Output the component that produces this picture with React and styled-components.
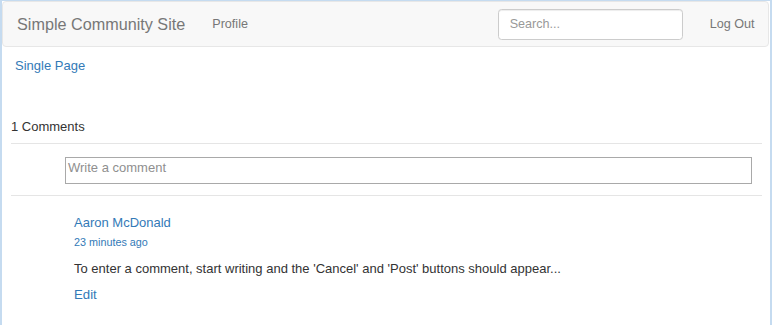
import React from 'react'
import styled, { createGlobalStyle } from 'styled-components'

const GlobalStyle = createGlobalStyle`
  html, body {
    margin: 0;
    padding: 0;
    background: #fff;
  }
  body {
    font-family: "Liberation Sans", Arial, Helvetica, sans-serif;
    font-size: 13px;
    line-height: 18px;
    color: #333;
  }
  * { box-sizing: border-box; }
`

function App() {
    return (
        <Frame>
            <GlobalStyle />
            <Navbar>
                <Brand href="#">Simple Community Site</Brand>
                <NavLink href="#">Profile</NavLink>
                <Spacer />
                <Search placeholder="Search..." />
                <NavLink href="#">Log Out</NavLink>
            </Navbar>
            <Page>
                <Crumb href="#">Single Page</Crumb>
                <Comments>
                    <Count>1 Comments</Count>
                    <Rule $gap={7} />
                    <Composer>
                        <CommentInput rows={1} placeholder="Write a comment" />
                    </Composer>
                    <Rule $gap={0} />
                    <Comment>
                        <Author href="#">Aaron McDonald</Author>
                        <Time>23 minutes ago</Time>
                        <Body>To enter a comment, start writing and the 'Cancel' and 'Post' buttons should appear...</Body>
                        <Edit href="#">Edit</Edit>
                    </Comment>
                </Comments>
            </Page>
        </Frame>
    )
}

export default App

const Frame = styled.div`
    height: 325px;
    border-top: 1px solid #c5dbf0;
    border-left: 2px solid #c5dbf0;
    border-right: 2px solid #c5dbf0;
    overflow: hidden;
`
const Navbar = styled.nav`
    display: flex;
    align-items: center;
    height: 46px;
    margin-right: 1px;
    background: #f8f8f8;
    border: 1px solid #e7e7e7;
    border-radius: 4px;
`
const Brand = styled.a`
    padding: 0 13.5px 0 14px;
    font-size: 16.2px;
    line-height: 20px;
    color: #777;
    text-decoration: none;
`
const NavLink = styled.a`
    padding: 0 13.5px;
    font-size: 12.6px;
    color: #777;
    text-decoration: none;
`
const Spacer = styled.div`
    flex: 1;
`
const Search = styled.input`
    width: 185px;
    height: 31px;
    margin-right: 13.5px;
    padding: 0 11px;
    font-family: inherit;
    font-size: 12.6px;
    color: #555;
    border: 1px solid #ccc;
    border-radius: 3.6px;
    background: #fff;
    box-shadow: inset 0 1px 1px rgba(0,0,0,.075);
    &::placeholder { color: #999; }
`
const Page = styled.main`
    display: flex;
    flex-direction: column;
    align-items: flex-start;
    padding: 10px 8px 0 9px;
`
const Crumb = styled.a`
    margin-left: 4px;
    color: #337ab7;
    text-decoration: none;
`
const Comments = styled.section`
    align-self: stretch;
    margin-top: 43px;
`
const Count = styled.div`
    line-height: 18px;
`
const Rule = styled.hr`
    margin: ${p => p.$gap}px 0 0;
    border: 0;
    border-top: 1px solid #e5e5e5;
`
const Composer = styled.div`
    padding: 13px 10px 11px 54px;
`
const CommentInput = styled.textarea`
    display: block;
    width: 100%;
    height: 27px;
    padding: 2px 2px 0;
    resize: none;
    overflow: hidden;
    font-family: inherit;
    font-size: 13px;
    line-height: 16px;
    border: 1px solid #a9a9a9;
    border-radius: 0;
    &::placeholder { color: #8f8f8f; }
`
const Comment = styled.article`
    display: flex;
    flex-direction: column;
    align-items: flex-start;
    padding: 18px 0 0 63px;
`
const Author = styled.a`
    color: #337ab7;
    text-decoration: none;
`
const Time = styled.div`
    margin-top: 2px;
    font-size: 10.8px;
    line-height: 16px;
    color: #337ab7;
`
const Body = styled.p`
    margin: 10px 0 0;
`
const Edit = styled.a`
    margin-top: 8px;
    font-size: 13.2px;
    color: #337ab7;
    text-decoration: none;
`
